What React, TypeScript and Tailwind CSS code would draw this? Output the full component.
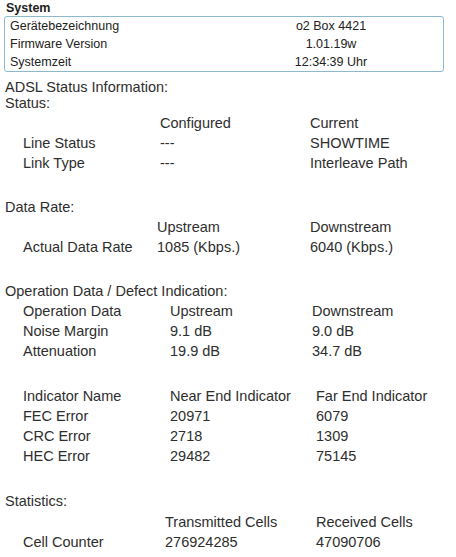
import React from "react";

type Row = string[];

function Table({ cols, rows }: { cols: string; rows: Row[] }) {
  return (
    <div className="pl-[23px]">
      {rows.map((r, i) => (
        <div key={i} className={`grid h-[20px] items-center ${cols}`}>
          {r.map((c, j) => (
            <div key={j} className="whitespace-nowrap">
              {c}
            </div>
          ))}
        </div>
      ))}
    </div>
  );
}

export default function App() {
  return (
    <div className="w-[456px] h-[557px] overflow-hidden bg-white text-[#2e2e2e] font-['Liberation_Sans',Arial,sans-serif]">
      <div className="pl-[6px] pt-[1px] text-[12.5px] font-bold leading-[15px] text-[#222]">System</div>
      <div className="ml-[4px] w-[440px] border border-[#8db8cd] rounded-[3px] text-[12.5px] text-[#222]">
        {[
          ["Gerätebezeichnung", "o2 Box 4421"],
          ["Firmware Version", "1.01.19w"],
          ["Systemzeit", "12:34:39 Uhr"],
        ].map(([a, b]) => (
          <div key={a} className="grid grid-cols-[214px_1fr] h-[18px] items-center">
            <div className="pl-[5px]">{a}</div>
            <div className="text-center">{b}</div>
          </div>
        ))}
      </div>

      <div className="mt-[7px] pl-[5px] text-[14.5px] leading-[16px]">ADSL Status Information:</div>
      <div className="pl-[5px] text-[14.5px] leading-[16px]">Status:</div>
      <div className="text-[14.5px] mt-[2px]">
        <Table
          cols="grid-cols-[137px_150px_1fr]"
          rows={[
            ["", "Configured", "Current"],
            ["Line Status", "---", "SHOWTIME"],
            ["Link Type", "---", "Interleave Path"],
          ]}
        />
      </div>

      <div className="mt-[25px] h-[20px] flex items-center pl-[5px] text-[14.5px]">Data Rate:</div>
      <div className="text-[14.5px] -mt-[1px]">
        <Table
          cols="grid-cols-[134px_153px_1fr]"
          rows={[
            ["", "Upstream", "Downstream"],
            ["Actual Data Rate", "1085 (Kbps.)", "6040 (Kbps.)"],
          ]}
        />
      </div>

      <div className="mt-[25px] h-[20px] flex items-center pl-[5px] text-[14.5px]">Operation Data / Defect Indication:</div>
      <div className="text-[14.5px] -mt-[1px]">
        <Table
          cols="grid-cols-[147px_142px_1fr]"
          rows={[
            ["Operation Data", "Upstream", "Downstream"],
            ["Noise Margin", "9.1 dB", "9.0 dB"],
            ["Attenuation", "19.9 dB", "34.7 dB"],
          ]}
        />
      </div>

      <div className="mt-[25px] text-[14.5px]">
        <Table
          cols="grid-cols-[147px_146px_1fr]"
          rows={[
            ["Indicator Name", "Near End Indicator", "Far End Indicator"],
            ["FEC Error", "20971", "6079"],
            ["CRC Error", "2718", "1309"],
            ["HEC Error", "29482", "75145"],
          ]}
        />
      </div>

      <div className="mt-[26px] h-[20px] flex items-center pl-[5px] text-[14.5px]">Statistics:</div>
      <div className="text-[14.5px]">
        <Table
          cols="grid-cols-[142px_151px_1fr]"
          rows={[
            ["", "Transmitted Cells", "Received Cells"],
            ["Cell Counter", "276924285", "47090706"],
          ]}
        />
      </div>
    </div>
  );
}
